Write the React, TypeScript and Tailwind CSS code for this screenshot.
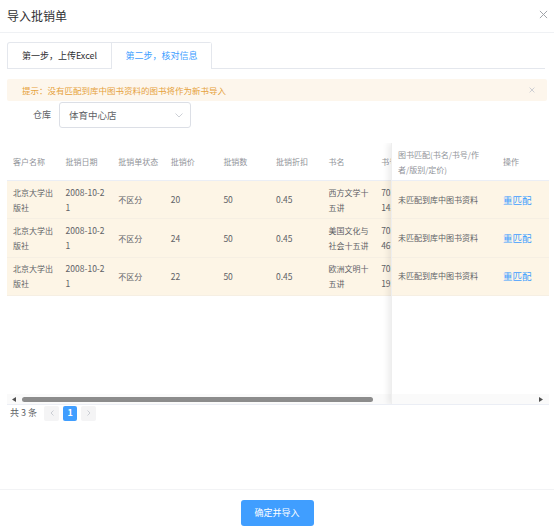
import React from "react";

type Row = {
	kehu: string;
	riqi: string;
	zhuangtai: string;
	jia: string;
	shu: string;
	zhekou: string;
	shuming: string;
	shuhao: string;
};

const rows: Row[] = [
	{ kehu: "北京大学出版社", riqi: "2008-10-21", zhuangtai: "不区分", jia: "20", shu: "50", zhekou: "0.45", shuming: "西方文学十五讲", shuhao: "7030 1458" },
	{ kehu: "北京大学出版社", riqi: "2008-10-21", zhuangtai: "不区分", jia: "24", shu: "50", zhekou: "0.45", shuming: "美国文化与社会十五讲", shuhao: "7030 4672" },
	{ kehu: "北京大学出版社", riqi: "2008-10-21", zhuangtai: "不区分", jia: "22", shu: "50", zhekou: "0.45", shuming: "欧洲文明十五讲", shuhao: "7030 1935" },
];

const headers = ["客户名称", "批销日期", "批销单状态", "批销价", "批销数", "批销折扣", "书名", "书号"];

const App: React.FC = () => {
	return (
		<div className="w-[554px] h-[528px] bg-white flex flex-col font-['Noto_Sans_CJK_SC','Microsoft_YaHei',sans-serif] text-[#606266]">
			{/* cabecera */}
			<div className="h-[33px] shrink-0 flex items-center justify-between pl-[7px] pr-[6px] border-b border-[#eff1f4]">
				<span className="text-[12px] text-[#303133] leading-none">导入批销单</span>
				<svg width="9" height="9" viewBox="0 0 10 10" className="-mt-[4px]">
					<path d="M1 1L9 9M9 1L1 9" stroke="#a0a3a8" strokeWidth="1.1" />
				</svg>
			</div>

			<div className="flex-1 px-[7px] pt-[9px]">
				{/* pestañas */}
				<div className="flex h-[27px] border-b border-[#e4e7ed] mr-[2px]">
					<div className="flex border border-b-0 border-[#e4e7ed] rounded-t-[3px]">
						<div className="w-[103px] flex items-center justify-center text-[9px] text-[#303133] border-b border-[#e4e7ed] -mb-px">
							第一步，上传Excel
						</div>
						<div className="w-[100px] flex items-center justify-center text-[9px] text-[#409eff] border-l border-[#e4e7ed] bg-white -mb-px">
							第二步，核对信息
						</div>
					</div>
				</div>

				{/* aviso */}
				<div className="mt-[10px] h-[22px] bg-[#fdf6ec] rounded-[2px] flex items-center justify-between pl-[15px] pr-[12px]">
					<span className="text-[8.5px] text-[#e6a23c]">提示：没有匹配到库中图书资料的图书将作为新书导入</span>
					<svg width="6" height="6" viewBox="0 0 10 10">
						<path d="M1 1L9 9M9 1L1 9" stroke="#c0c4cc" strokeWidth="1.3" />
					</svg>
				</div>

				{/* almacén */}
				<div className="mt-[1px] flex items-center h-[26px]">
					<span className="w-[45px] text-right pr-[1px] text-[9px] text-[#606266]">仓库</span>
					<div className="ml-[7px] w-[132px] h-[26px] border border-[#dcdfe6] rounded-[3px] flex items-center justify-between pl-[9px] pr-[7px]">
						<span className="text-[9.5px] text-[#606266]">体育中心店</span>
						<svg width="8" height="5" viewBox="0 0 8 5">
							<path d="M0.5 0.5L4 4L7.5 0.5" fill="none" stroke="#c0c4cc" strokeWidth="0.8" />
						</svg>
					</div>
				</div>

				{/* tabla */}
				<div className="relative mt-[15px] w-[542px] h-[262px] overflow-hidden border-b border-[#ebeef5]">
					<div className="w-[700px] text-[8px]">
						<div className="flex h-[38px] items-center border-b border-[#ebeef5] text-[#909399]">
							{headers.map((h) => (
								<div key={h} className="w-[52.6px] shrink-0 pl-[6px] pr-[4px] whitespace-nowrap">
									{h}
								</div>
							))}
						</div>
						{rows.map((r, i) => (
							<div key={i} className="flex h-[38.4px] items-center bg-[#fdf5e6] border-b border-[#f6efe3] leading-[15px]">
								<div className="w-[52.6px] shrink-0 pl-[6px] pr-[4px] break-all">{r.kehu}</div>
								<div className="w-[52.6px] shrink-0 pl-[6px] pr-[4px] whitespace-pre-line text-[8.5px]">
									{r.riqi.slice(0, 9) + "\n" + r.riqi.slice(9)}
								</div>
								<div className="w-[52.6px] shrink-0 pl-[6px] pr-[4px]">{r.zhuangtai}</div>
								<div className="w-[52.6px] shrink-0 pl-[6px] pr-[4px] text-[8.5px]">{r.jia}</div>
								<div className="w-[52.6px] shrink-0 pl-[6px] pr-[4px] text-[8.5px]">{r.shu}</div>
								<div className="w-[52.6px] shrink-0 pl-[6px] pr-[4px] text-[8.5px]">{r.zhekou}</div>
								<div className="w-[52.6px] shrink-0 pl-[6px] pr-[4px] break-all">{r.shuming}</div>
								<div className="w-[52.6px] shrink-0 pl-[6px] pr-[4px] whitespace-pre-line text-[8.5px]">{r.shuhao.replace(" ", "\n")}</div>
							</div>
						))}
					</div>

					{/* barra de desplazamiento */}
					<div className="absolute left-0 bottom-0 w-full h-[10px] bg-[#fafafa] flex items-center">
						<svg width="4" height="5" viewBox="0 0 4 5" className="ml-[5px]">
							<path d="M4 0L0 2.5L4 5Z" fill="#505050" />
						</svg>
						<div className="ml-[6px] w-[351px] h-[5px] rounded-full bg-[#8c8c8c]" />
					</div>

					{/* columnas fijas a la derecha */}
					<div className="absolute top-0 right-0 bottom-0 w-[158px] bg-white shadow-[-3px_0_6px_rgba(0,0,0,0.08)] border-l border-[#eeeeee] text-[8px] flex flex-col">
						<div className="flex h-[38px] items-center border-b border-[#ebeef5] text-[#909399] leading-[15px]">
							<div className="w-[105px] shrink-0 pl-[6px] pr-[8px]">图书匹配(书名/书号/作者/版别/定价)</div>
							<div className="px-[6px]">操作</div>
						</div>
						{rows.map((_, i) => (
							<div key={i} className="flex h-[38.4px] items-center bg-[#fdf5e6] border-b border-[#f6efe3]">
								<div className="w-[105px] shrink-0 px-[6px] whitespace-nowrap">未匹配到库中图书资料</div>
								<div className="px-[6px] text-[9.5px] text-[#409eff]">重匹配</div>
							</div>
						))}
						<div className="flex-1" />
						<div className="h-[10px] bg-[#fafafa] flex items-center justify-end pr-[6px]">
							<svg width="4" height="5" viewBox="0 0 4 5">
								<path d="M0 0L4 2.5L0 5Z" fill="#505050" />
							</svg>
						</div>
					</div>
				</div>

				{/* paginación */}
				<div className="flex items-center h-[16px] mt-[0px] text-[9px]">
					<span className="ml-[3px] text-[#606266]">共 3 条</span>
					<div className="ml-[7px] w-[15px] h-[15px] rounded-[2px] bg-[#f4f4f5] flex items-center justify-center">
						<svg width="4" height="6" viewBox="0 0 4 6">
							<path d="M3.5 0.5L1 3L3.5 5.5" fill="none" stroke="#c0c4cc" strokeWidth="0.8" />
						</svg>
					</div>
					<div className="ml-[4px] w-[14px] h-[15px] rounded-[2px] bg-[#409eff] text-white font-bold flex items-center justify-center">
						1
					</div>
					<div className="ml-[4px] w-[15px] h-[15px] rounded-[2px] bg-[#f4f4f5] flex items-center justify-center">
						<svg width="4" height="6" viewBox="0 0 4 6">
							<path d="M0.5 0.5L3 3L0.5 5.5" fill="none" stroke="#c0c4cc" strokeWidth="0.8" />
						</svg>
					</div>
				</div>
			</div>

			{/* pie */}
			<div className="h-[39px] shrink-0 border-t border-[#f2f3f5] flex justify-center pt-[10px]">
				<button className="w-[73px] h-[26px] rounded-[3px] bg-[#409eff] text-white text-[9px]">
					确定并导入
				</button>
			</div>
		</div>
	);
};

export default App;
